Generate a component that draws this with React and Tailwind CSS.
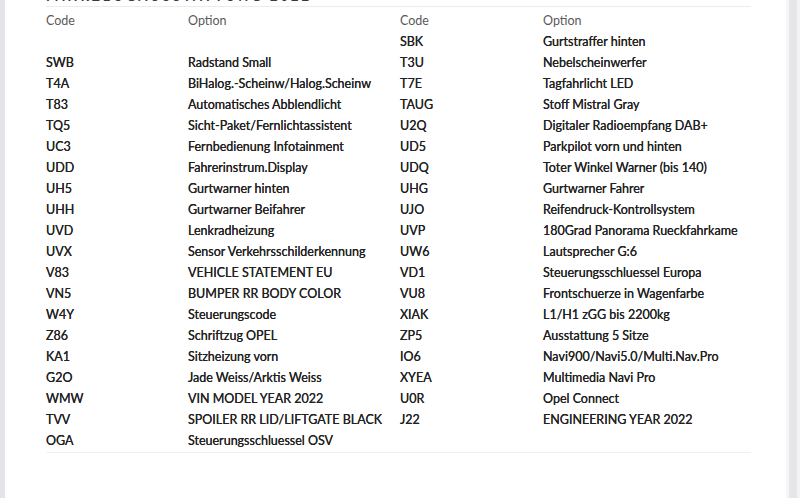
const rows = [
  ['', '', 'SBK', 'Gurtstraffer hinten'],
  ['SWB', 'Radstand Small', 'T3U', 'Nebelscheinwerfer'],
  ['T4A', 'BiHalog.-Scheinw/Halog.Scheinw', 'T7E', 'Tagfahrlicht LED'],
  ['T83', 'Automatisches Abblendlicht', 'TAUG', 'Stoff Mistral Gray'],
  ['TQ5', 'Sicht-Paket/Fernlichtassistent', 'U2Q', 'Digitaler Radioempfang DAB+'],
  ['UC3', 'Fernbedienung Infotainment', 'UD5', 'Parkpilot vorn und hinten'],
  ['UDD', 'Fahrerinstrum.Display', 'UDQ', 'Toter Winkel Warner (bis 140)'],
  ['UH5', 'Gurtwarner hinten', 'UHG', 'Gurtwarner Fahrer'],
  ['UHH', 'Gurtwarner Beifahrer', 'UJO', 'Reifendruck-Kontrollsystem'],
  ['UVD', 'Lenkradheizung', 'UVP', '180Grad Panorama Rueckfahrkame'],
  ['UVX', 'Sensor Verkehrsschilderkennung', 'UW6', 'Lautsprecher G:6'],
  ['V83', 'VEHICLE STATEMENT EU', 'VD1', 'Steuerungsschluessel Europa'],
  ['VN5', 'BUMPER RR BODY COLOR', 'VU8', 'Frontschuerze in Wagenfarbe'],
  ['W4Y', 'Steuerungscode', 'XIAK', 'L1/H1 zGG bis 2200kg'],
  ['Z86', 'Schriftzug OPEL', 'ZP5', 'Ausstattung 5 Sitze'],
  ['KA1', 'Sitzheizung vorn', 'IO6', 'Navi900/Navi5.0/Multi.Nav.Pro'],
  ['G2O', 'Jade Weiss/Arktis Weiss', 'XYEA', 'Multimedia Navi Pro'],
  ['WMW', 'VIN MODEL YEAR 2022', 'U0R', 'Opel Connect'],
  ['TVV', 'SPOILER RR LID/LIFTGATE BLACK', 'J22', 'ENGINEERING YEAR 2022'],
  ['OGA', 'Steuerungsschluessel OSV', '', ''],
]

export default function App() {
  return (
    <div className="w-[800px] h-[498px] bg-white flex overflow-hidden font-['Lato',sans-serif]">
      {/* scan edge left */}
      <div className="w-[5px] shrink-0 bg-[#e3e3e9]" />

      <div className="flex-1 min-w-0 flex flex-col pl-[41px]">
        {/* title, cut off by the scan */}
        <div className="h-[7px] overflow-hidden border-b border-[#ececef] w-[705px]">
          <div className="-mt-[10px] text-[13px] font-bold tracking-[3px] text-[#3a3a3a] leading-[13px]">
            FAHRZEUGAUSSTATTUNG 2022
          </div>
        </div>

        <div className="grid grid-cols-[142px_212px_143px_208px] text-[12.5px] leading-[21px] mt-[3px] w-[705px] border-b border-[#f0f0f2] pb-[1px]">
          <div className="text-[#5a5a5a]">Code</div>
          <div className="text-[#5a5a5a]">Option</div>
          <div className="text-[#5a5a5a]">Code</div>
          <div className="text-[#5a5a5a]">Option</div>
          {rows.map((r, i) =>
            r.map((c, j) => (
              <div key={i + '-' + j} className="text-[#222] whitespace-nowrap [text-shadow:0_0_0.4px_#222]">
                {c || '\u00a0'}
              </div>
            ))
          )}
        </div>
      </div>

      {/* scan edge right */}
      <div className="w-[14px] shrink-0 flex">
        <div className="w-[3px] bg-[#f6f6f8]" />
        <div className="w-[8px] bg-[#e6e6ea]" />
        <div className="w-[3px] bg-[#f3f3f5]" />
      </div>
    </div>
  )
}
